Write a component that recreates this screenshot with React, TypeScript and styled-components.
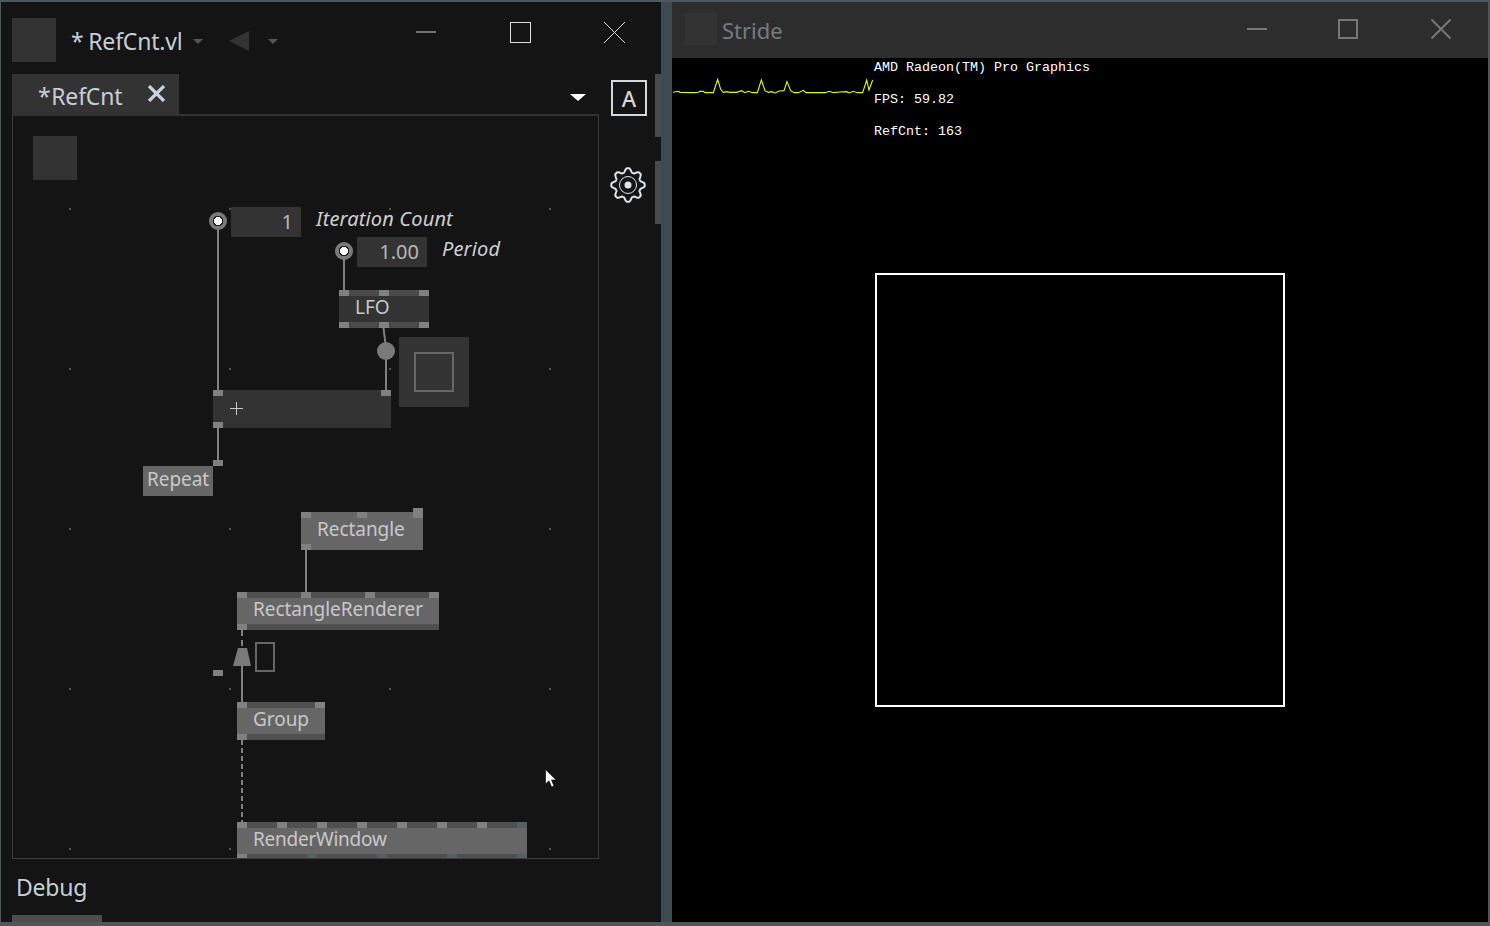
import styled, { createGlobalStyle, css } from 'styled-components';

const UI_FONT = '"Noto Sans", "Open Sans", sans-serif';

// the patch canvas starts at this point of the page; node props below are page coordinates
const ORIGIN_X = 13;
const ORIGIN_Y = 116;

interface IPlacedProps {
  $x: number;
  $y: number;
}

const placed = css<IPlacedProps>`
  position: absolute;
  left: ${(p) => p.$x - ORIGIN_X}px;
  top: ${(p) => p.$y - ORIGIN_Y}px;
`;

const GlobalStyles = createGlobalStyle`
  html, body {
    margin: 0;
    height: 100%;
    background: #50575b;
    overflow: hidden;
    font-family: ${UI_FONT};
  }
`;

const Desktop = styled.div`
  width: 1490px;
  height: 926px;
  box-sizing: border-box;
  display: flex;
  padding: 2px 2px 4px 1px;
  background: #50575b;
`;

const Gutter = styled.div`
  width: 11px;
  flex: none;
  background: #3f4a50;
`;

const PatchWindow = styled.div`
  width: 660px;
  background: #141414;
  display: flex;
  flex-direction: column;
`;

const TitleBar = styled.div`
  height: 72px;
  flex: none;
  display: flex;
  align-items: flex-start;
`;

const TitleLead = styled.div`
  display: flex;
  align-items: center;
  margin: 16px 0 0 11px;
  height: 44px;
  flex: 1;
`;

const IconStub = styled.div<{ $size: number }>`
  width: ${(p) => p.$size}px;
  height: ${(p) => p.$size}px;
  background: #333333;
  flex: none;
`;

const TitleText = styled.span`
  margin: 2px 0 0 15px;
  font-size: 23px;
  line-height: 44px;
  color: #c4d0d8;
  letter-spacing: -0.2px;
  word-spacing: -1px;
  white-space: pre;
`;

const Caret = styled.div<{ $gap: number }>`
  margin-left: ${(p) => p.$gap}px;
  margin-top: 3px;
  width: 0;
  height: 0;
  border-left: 5px solid transparent;
  border-right: 5px solid transparent;
  border-top: 5px solid #555555;
`;

const BackArrow = styled.div`
  margin-left: 26px;
  margin-top: 1px;
  width: 0;
  height: 0;
  border-top: 10px solid transparent;
  border-bottom: 10px solid transparent;
  border-right: 20px solid #333333;
`;

const WindowButton = styled.div<{ $width: number; $height: number }>`
  width: ${(p) => p.$width}px;
  height: ${(p) => p.$height}px;
  display: flex;
  align-items: center;
  justify-content: center;
  flex: none;
`;

const PatchBody = styled.div`
  display: flex;
  height: 785px;
  flex: none;
`;

const EditorColumn = styled.div`
  width: 587px;
  margin-left: 11px;
  display: flex;
  flex-direction: column;
  flex: none;
`;

const TabRow = styled.div`
  height: 42px;
  flex: none;
  box-sizing: border-box;
  border-bottom: 2px solid #333333;
  display: flex;
  align-items: flex-start;
  justify-content: space-between;
`;

const Tab = styled.div`
  width: 167px;
  height: 42px;
  background: #333333;
  display: flex;
  align-items: center;
  padding: 2px 0 0 26px;
  box-sizing: border-box;
  font-size: 23px;
  color: #c4d0d8;
  letter-spacing: -0.2px;
  word-spacing: -5px;
  white-space: pre;
`;

const TabClose = styled.svg`
  margin-left: 25px;
  margin-top: -6px;
  flex: none;
`;

const MenuArrow = styled.div`
  margin: 20px 13px 0 0;
  width: 0;
  height: 0;
  border-left: 8px solid transparent;
  border-right: 8px solid transparent;
  border-top: 7px solid #ffffff;
`;

const Canvas = styled.div`
  position: relative;
  flex: 1;
  box-sizing: border-box;
  border: 1px solid #3c3c3c;
  border-top: 0;
  overflow: hidden;
  color: #c8c8c8;
`;

const WireLayer = styled.svg`
  position: absolute;
  left: 0;
  top: 0;
`;

const PatchIcon = styled.div<IPlacedProps>`
  ${placed}
  width: 44px;
  height: 44px;
  background: #333333;
`;

const NodeBox = styled.div<IPlacedProps & { $w: number; $fill: string }>`
  ${placed}
  width: ${(p) => p.$w}px;
  background: ${(p) => p.$fill};
`;

const PinStrip = styled.div<{ $tone: string }>`
  position: relative;
  height: 6px;
  background: ${(p) => p.$tone};
`;

const Pin = styled.div<{ $at: number; $tone?: string }>`
  position: absolute;
  left: ${(p) => p.$at}px;
  top: 0;
  width: 10px;
  height: 100%;
  background: ${(p) => p.$tone ?? '#808080'};
`;

const NodeLabel = styled.div<{
  $inset?: number;
  $height?: number;
  $spacing?: number;
}>`
  display: flow-root;
  height: ${(p) => p.$height ?? 26}px;
  line-height: ${(p) => (p.$height ?? 26) - 4}px;
  padding-left: ${(p) => p.$inset ?? 16}px;
  font-size: 19px;
  letter-spacing: ${(p) => p.$spacing ?? -0.05}px;
  color: #c8c8c8;
  white-space: nowrap;
`;

const PlusMark = styled.svg`
  display: block;
  margin: 6px 0 0 17px;
`;

const ValueBox = styled.div<IPlacedProps>`
  ${placed}
  width: 70px;
  height: 30px;
  line-height: 30px;
  box-sizing: border-box;
  padding-right: 8px;
  background: #333333;
  text-align: right;
  font-size: 20px;
  color: #b8b8b8;
`;

const IoPad = styled.div<IPlacedProps>`
  ${placed}
  width: 18px;
  height: 18px;
  border-radius: 50%;
  background: radial-gradient(circle, #ffffff 0 4px, #1c1c1c 4px 5px, #7a7a7a 5.5px);
`;

const PinLabel = styled.div<IPlacedProps>`
  ${placed}
  font-size: 20px;
  line-height: 26px;
  font-style: italic;
  letter-spacing: 0.15px;
  color: #cfcfcf;
  white-space: nowrap;
`;

const ToggleBox = styled.div<IPlacedProps>`
  ${placed}
  width: 70px;
  height: 70px;
  background: #333333;
  display: flex;
  align-items: center;
  justify-content: center;
`;

const ToggleInner = styled.div`
  width: 40px;
  height: 40px;
  box-sizing: border-box;
  border: 2px solid #666666;
`;

const OutlineStub = styled.div<IPlacedProps>`
  ${placed}
  width: 20px;
  height: 30px;
  box-sizing: border-box;
  border: 2px solid #666666;
`;

const LoosePin = styled.div<IPlacedProps>`
  ${placed}
  width: 10px;
  height: 6px;
  background: #808080;
`;

const Cursor = styled.svg<IPlacedProps>`
  ${placed}
`;

const ToolColumn = styled.div`
  width: 56px;
  flex: none;
  display: flex;
  flex-direction: column;
  align-items: flex-start;
  padding: 6px 0 0 12px;
  box-sizing: border-box;
`;

const AutoButton = styled.div`
  width: 36px;
  height: 36px;
  box-sizing: border-box;
  border: 2px solid #d4d8da;
  display: flex;
  align-items: center;
  justify-content: center;
  font-size: 22px;
  font-weight: 500;
  color: #d4d8da;
`;

const GearIcon = styled.svg`
  margin: 51px 0 0 -1px;
`;

const ThumbColumn = styled.div`
  width: 6px;
  flex: none;
  display: flex;
  flex-direction: column;
  gap: 24px;
`;

const Thumb = styled.div`
  height: 63px;
  background: #4a4a4a;
`;

const DebugLabel = styled.div`
  margin: 13px 0 0 15px;
  font-size: 23px;
  line-height: 30px;
  color: #c4d0d8;
  letter-spacing: -0.2px;
`;

const DebugTab = styled.div`
  margin: auto 0 0 11px;
  width: 90px;
  height: 7px;
  background: #4d4d4d;
`;

const RenderWindow = styled.div`
  width: 816px;
  background: #000000;
  display: flex;
  flex-direction: column;
`;

const RenderTitle = styled.div`
  height: 56px;
  flex: none;
  background: #2d2d2d;
  display: flex;
  align-items: flex-start;
`;

const RenderLead = styled.div`
  flex: 1;
  height: 54px;
  display: flex;
  align-items: center;
  padding-left: 13px;
`;

const RenderName = styled.span`
  margin: 2px 0 0 5px;
  font-size: 22px;
  color: #737c82;
`;

const Viewport = styled.div`
  position: relative;
  flex: 1;
  display: flex;
  align-items: center;
  justify-content: center;
`;

const DrawnRect = styled.div`
  width: 410px;
  height: 434px;
  box-sizing: border-box;
  border: 2px solid #ffffff;
`;

const Stats = styled.div`
  position: absolute;
  left: 202px;
  top: 2px;
  display: flex;
  flex-direction: column;
  gap: 16px;
`;

const StatLine = styled.div`
  height: 16px;
  line-height: 16px;
  font-family: 'Liberation Mono', monospace;
  font-size: 13.33px;
  color: #ffffff;
  white-space: pre;
`;

const FrameGraph = styled.svg`
  position: absolute;
  left: 1px;
  top: 12px;
`;

const NODE_LIGHT = '#666666';
const NODE_DARK = '#333333';
const STRIP_LIGHT = '#505050';
const STRIP_DARK = '#4a4a4a';

const gridDots = [70, 230, 390, 550].flatMap((x) =>
  [208, 368, 528, 688, 848].map((y) => ({ x, y })),
);

const graphPoints =
  '9,127 25,124 30,127 70,128 85,127 90,124 100,124 105,128 130,128 143,88 152,118 160,127 172,125 178,127 200,127 215,122 225,128 235,124 248,128 262,128 274,90 285,122 295,127 305,125 315,129 328,123 342,122 351,95 362,122 372,128 385,128 400,121 408,128 465,128 478,124 490,128 510,126 530,125 538,129 550,124 562,128 578,128 590,90 597,120 608,90';

// eight soft lobes round the middle of the gear
const gearOutline = Array.from({ length: 145 }, (_, i) => {
  const angle = (i / 144) * Math.PI * 2;
  const radius = 14.8 + 1.9 * Math.max(-1, Math.min(1, 1.25 * Math.cos(angle * 8)));
  return `${(18 + radius * Math.cos(angle)).toFixed(2)},${(18 + radius * Math.sin(angle)).toFixed(2)}`;
}).join(' ');

export default function App() {
  return (
    <>
      <GlobalStyles />
      <Desktop>
        <PatchWindow>
          <TitleBar>
            <TitleLead>
              <IconStub $size={44} />
              <TitleText>* RefCnt.vl</TitleText>
              <Caret $gap={11} />
              <BackArrow />
              <Caret $gap={19} />
            </TitleLead>
            <WindowButton $width={94} $height={60}>
              <svg width="20" height="2" viewBox="0 0 20 2">
                <line x1="0" y1="1" x2="20" y2="1" stroke="#cccccc" strokeWidth="1" />
              </svg>
            </WindowButton>
            <WindowButton $width={94} $height={60}>
              <svg width="21" height="21" viewBox="0 0 21 21">
                <rect x="0.5" y="0.5" width="20" height="20" fill="none" stroke="#dddddd" strokeWidth="1" />
              </svg>
            </WindowButton>
            <WindowButton $width={94} $height={60}>
              <svg width="21" height="21" viewBox="0 0 21 21">
                <path d="M0 0 L21 21 M21 0 L0 21" stroke="#dddddd" strokeWidth="1" />
              </svg>
            </WindowButton>
          </TitleBar>
          <PatchBody>
            <EditorColumn>
              <TabRow>
                <Tab>
                  * RefCnt
                  <TabClose width="19" height="17" viewBox="0 0 19 17">
                    <path d="M2 1 L17 16 M17 1 L2 16" stroke="#c8d4dc" strokeWidth="3.2" />
                  </TabClose>
                </Tab>
                <MenuArrow />
              </TabRow>
              <Canvas>
                <WireLayer width="585" height="742" viewBox="13 116 585 742">
                  {gridDots.map((dot) => (
                    <rect key={`${dot.x}-${dot.y}`} x={dot.x - 1} y={dot.y} width="2" height="2" fill="#505050" />
                  ))}
                  <g stroke="#808080" strokeWidth="2" fill="none">
                    <line x1="218" y1="228" x2="218" y2="390" />
                    <line x1="344" y1="258" x2="344" y2="290" />
                    <line x1="383.5" y1="328" x2="385.5" y2="344" />
                    <line x1="386" y1="352" x2="386" y2="390" />
                    <line x1="218" y1="428" x2="218" y2="460" />
                    <line x1="306" y1="550" x2="306" y2="592" />
                    <line x1="242" y1="664" x2="242" y2="702" />
                    <line x1="242" y1="630" x2="242" y2="650" strokeDasharray="6 4" />
                    <line x1="242" y1="740" x2="242" y2="822" strokeDasharray="5 3" />
                  </g>
                  <circle cx="386" cy="351" r="9" fill="#7a7a7a" />
                  <polygon points="238,648 247,648 251,666 233,666" fill="#7a7a7a" />
                </WireLayer>

                <PatchIcon $x={33} $y={136} />

                <IoPad $x={209} $y={212} />
                <ValueBox $x={231} $y={207}>1</ValueBox>
                <PinLabel $x={316} $y={206}>Iteration Count</PinLabel>

                <IoPad $x={335} $y={242} />
                <ValueBox $x={357} $y={237}>1.00</ValueBox>
                <PinLabel $x={442} $y={236}>Period</PinLabel>

                <NodeBox $x={339} $y={290} $w={90} $fill={NODE_DARK}>
                  <PinStrip $tone={STRIP_DARK}>
                    <Pin $at={0} />
                    <Pin $at={40} />
                    <Pin $at={80} />
                  </PinStrip>
                  <NodeLabel>LFO</NodeLabel>
                  <PinStrip $tone={STRIP_DARK}>
                    <Pin $at={0} />
                    <Pin $at={40} />
                    <Pin $at={80} />
                  </PinStrip>
                </NodeBox>

                <ToggleBox $x={399} $y={337}>
                  <ToggleInner />
                </ToggleBox>

                <NodeBox $x={213} $y={390} $w={178} $fill={NODE_DARK}>
                  <PinStrip $tone={NODE_DARK}>
                    <Pin $at={0} />
                    <Pin $at={168} />
                  </PinStrip>
                  <NodeLabel $inset={0}>
                    <PlusMark width="13" height="13" viewBox="0 0 13 13">
                      <path d="M6.5 0 V13 M0 6.5 H13" stroke="#c8c8c8" strokeWidth="1" />
                    </PlusMark>
                  </NodeLabel>
                  <PinStrip $tone={NODE_DARK}>
                    <Pin $at={0} />
                  </PinStrip>
                </NodeBox>

                <LoosePin $x={213} $y={460} />
                <NodeBox $x={143} $y={466} $w={70} $fill={NODE_LIGHT}>
                  <NodeLabel $inset={4} $height={30}>Repeat</NodeLabel>
                </NodeBox>

                <LoosePin $x={413} $y={508} />
                <NodeBox $x={301} $y={512} $w={122} $fill={NODE_LIGHT}>
                  <PinStrip $tone={NODE_LIGHT}>
                    <Pin $at={0} />
                    <Pin $at={56} />
                    <Pin $at={112} />
                  </PinStrip>
                  <NodeLabel>Rectangle</NodeLabel>
                  <PinStrip $tone={NODE_LIGHT}>
                    <Pin $at={0} />
                  </PinStrip>
                </NodeBox>

                <NodeBox $x={237} $y={592} $w={202} $fill={NODE_LIGHT}>
                  <PinStrip $tone={STRIP_LIGHT}>
                    <Pin $at={0} />
                    <Pin $at={64} />
                    <Pin $at={128} />
                    <Pin $at={192} />
                  </PinStrip>
                  <NodeLabel>RectangleRenderer</NodeLabel>
                  <PinStrip $tone={STRIP_LIGHT}>
                    <Pin $at={0} />
                  </PinStrip>
                </NodeBox>

                <OutlineStub $x={255} $y={642} />
                <LoosePin $x={213} $y={670} />

                <NodeBox $x={237} $y={702} $w={88} $fill={NODE_LIGHT}>
                  <PinStrip $tone={STRIP_LIGHT}>
                    <Pin $at={0} />
                    <Pin $at={78} />
                  </PinStrip>
                  <NodeLabel>Group</NodeLabel>
                  <PinStrip $tone={STRIP_LIGHT}>
                    <Pin $at={0} />
                  </PinStrip>
                </NodeBox>

                <NodeBox $x={237} $y={822} $w={290} $fill={NODE_LIGHT}>
                  <PinStrip $tone={STRIP_LIGHT}>
                    {[0, 40, 80, 120, 160, 200, 240].map((at) => (
                      <Pin key={at} $at={at} />
                    ))}
                    <Pin $at={280} $tone="#566060" />
                  </PinStrip>
                  <NodeLabel $spacing={-0.25}>RenderWindow</NodeLabel>
                  <PinStrip $tone={STRIP_LIGHT}>
                    <Pin $at={0} />
                    {[70, 140, 210, 280].map((at) => (
                      <Pin key={at} $at={at} $tone="#566060" />
                    ))}
                  </PinStrip>
                </NodeBox>

                <Cursor $x={545} $y={769} width="12" height="19" viewBox="0 0 12 19">
                  <path d="M0.5 0.5 L0.5 15 L4 11.8 L6.6 18 L9 17 L6.5 11 L11.2 11 Z" fill="#ffffff" stroke="#000000" strokeWidth="0.6" />
                </Cursor>
              </Canvas>
            </EditorColumn>
            <ToolColumn>
              <AutoButton>A</AutoButton>
              <GearIcon width="36" height="36" viewBox="0 0 36 36">
                <polygon points={gearOutline} fill="none" stroke="#dfe4e8" strokeWidth="2" />
                <circle cx="18" cy="18" r="8.5" fill="none" stroke="#dfe4e8" strokeWidth="1" />
                <circle cx="18" cy="18" r="3.5" fill="#dfe4e8" />
              </GearIcon>
            </ToolColumn>
            <ThumbColumn>
              <Thumb />
              <Thumb />
            </ThumbColumn>
          </PatchBody>
          <DebugLabel>Debug</DebugLabel>
          <DebugTab />
        </PatchWindow>

        <Gutter />

        <RenderWindow>
          <RenderTitle>
            <RenderLead>
              <IconStub $size={32} />
              <RenderName>Stride</RenderName>
            </RenderLead>
            <WindowButton $width={90} $height={54}>
              <svg width="20" height="2" viewBox="0 0 20 2">
                <rect width="20" height="2" fill="#777777" />
              </svg>
            </WindowButton>
            <WindowButton $width={92} $height={54}>
              <svg width="20" height="20" viewBox="0 0 20 20">
                <rect x="1" y="1" width="18" height="18" fill="none" stroke="#777777" strokeWidth="2" />
              </svg>
            </WindowButton>
            <WindowButton $width={94} $height={54}>
              <svg width="20" height="20" viewBox="0 0 20 20">
                <path d="M0.5 0.5 L19.5 19.5 M19.5 0.5 L0.5 19.5" stroke="#777777" strokeWidth="2" />
              </svg>
            </WindowButton>
          </RenderTitle>
          <Viewport>
            <DrawnRect />
            <FrameGraph width="200" height="30" viewBox="9 60 600 90">
              <polyline points={graphPoints} fill="none" stroke="#e0ff00" strokeWidth="3.3" />
            </FrameGraph>
            <Stats>
              <StatLine>AMD Radeon(TM) Pro Graphics</StatLine>
              <StatLine>FPS: 59.82</StatLine>
              <StatLine>RefCnt: 163</StatLine>
            </Stats>
          </Viewport>
        </RenderWindow>
      </Desktop>
    </>
  );
}
